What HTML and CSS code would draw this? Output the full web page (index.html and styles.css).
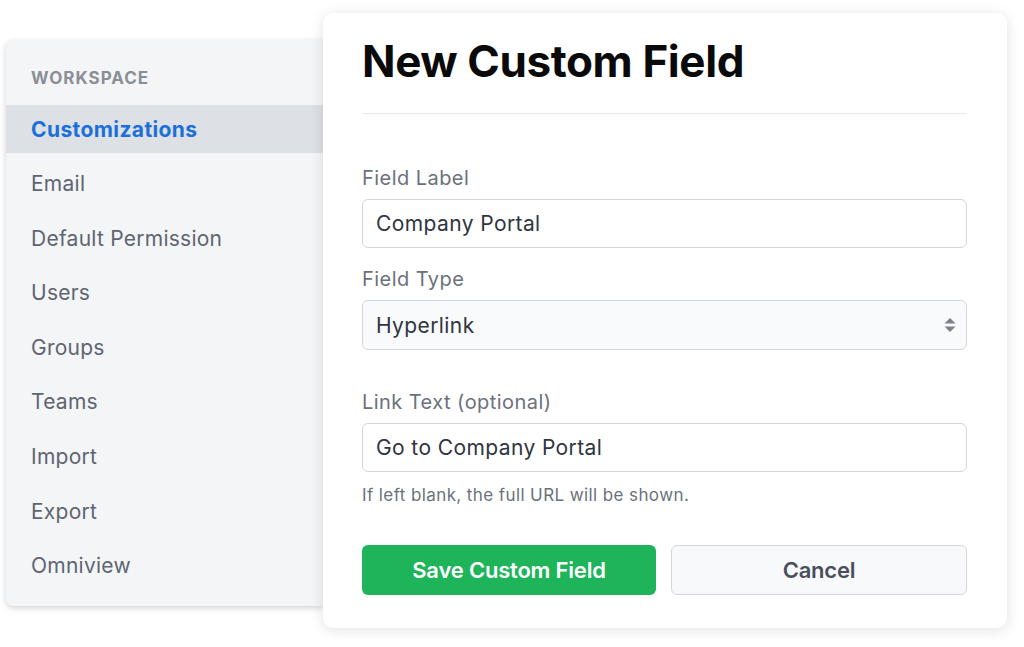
FILE: index.html
```html
<!DOCTYPE html>
<html lang="en">
<head>
<meta charset="utf-8">
<title>New Custom Field</title>
<link rel="stylesheet" href="styles.css">
</head>
<body>
<div class="stage">
  <nav class="sidebar">
    <div class="side-head">WORKSPACE</div>
    <ul class="side-list">
      <li class="side-item active">Customizations</li>
      <li class="side-item">Email</li>
      <li class="side-item">Default Permission</li>
      <li class="side-item">Users</li>
      <li class="side-item">Groups</li>
      <li class="side-item">Teams</li>
      <li class="side-item">Import</li>
      <li class="side-item">Export</li>
      <li class="side-item">Omniview</li>
    </ul>
  </nav>
  <main class="card">
    <h1 class="title">New Custom Field</h1>
    <div class="divider"></div>
    <div class="field">
      <label class="label">Field Label</label>
      <div class="input">Company Portal</div>
    </div>
    <div class="field">
      <label class="label">Field Type</label>
      <div class="input select">
        <span>Hyperlink</span>
        <svg class="arrows" width="12" height="16" viewBox="0 0 12 16"><path d="M6 1 L11.5 6.5 H0.5 Z" fill="#7b8089"/><path d="M6 15 L11.5 9.5 H0.5 Z" fill="#7b8089"/></svg>
      </div>
    </div>
    <div class="field field-gap">
      <label class="label">Link Text (optional)</label>
      <div class="input">Go to Company Portal</div>
      <p class="help">If left blank, the full URL will be shown.</p>
    </div>
    <div class="actions">
      <button class="btn btn-primary">Save Custom Field</button>
      <button class="btn btn-secondary">Cancel</button>
    </div>
  </main>
</div>
</body>
</html>
```
FILE: styles.css
```css
* { box-sizing: border-box; }
html, body { margin: 0; padding: 0; background: #ffffff; }
body { font-family: Inter, "Noto Sans", sans-serif; width: 1024px; height: 647px; overflow: hidden; }
.stage { display: flex; align-items: flex-start; padding-left: 6px; }

.sidebar {
  width: 317px;
  height: 566px;
  margin-top: 40px;
  background: #f4f5f7;
  border-radius: 8px 0 0 8px;
  box-shadow: 0 2px 6px rgba(0,0,0,0.18);
  padding: 28px 0 17px 0;
  position: relative;
  z-index: 1;
}
.side-head {
  font-size: 17px;
  line-height: 20px;
  font-weight: 700;
  color: #8a8e96;
  padding-left: 25px;
  letter-spacing: 1px;
}
.side-list { list-style: none; margin: 17px 0 0 0; padding: 0; display: flex; flex-direction: column; gap: 6.6px; }
.side-item {
  height: 48px;
  display: flex;
  align-items: center;
  padding-left: 25px;
  font-size: 21px;
  letter-spacing: 0.25px;
  color: #5e6571;
}
.side-item.active { background: #dde1e6; color: #1a6fd8; font-weight: 700; letter-spacing: 0.4px; }

.card {
  width: 684px;
  height: 615px;
  margin-top: 13px;
  background: #ffffff;
  border-radius: 10px;
  box-shadow: 0 2px 14px rgba(0,0,0,0.12);
  padding: 22px 40px 0 39px;
  position: relative;
  z-index: 2;
}
.title {
  margin: 0;
  font-size: 44px;
  line-height: 52px;
  font-weight: 700;
  color: #0a0a0a;
  letter-spacing: -0.4px;
}
.divider { height: 1px; background: #e6e9ee; margin-top: 26px; margin-bottom: 52px; }
.field { display: flex; flex-direction: column; }
.label { font-size: 20px; line-height: 24px; color: #6b717b; margin-bottom: 9px; letter-spacing: 0.45px; }
.input {
  height: 49px;
  border: 1px solid #d3d7dd;
  border-radius: 6px;
  display: flex;
  align-items: center;
  padding-left: 13px;
  font-size: 21px;
  letter-spacing: 0.4px;
  color: #2f3540;
  margin-bottom: 19px;
  background: #fff;
}
.select { background: #f9fafb; justify-content: space-between; padding-right: 10px; margin-bottom: 40px; height: 50px; }
.arrows { display: block; }
.help { margin: 13px 0 0 0; font-size: 17px; line-height: 20px; color: #6b717b; letter-spacing: 0.4px; }
.field-gap .input { margin-bottom: 0; }
.actions { display: flex; gap: 15px; margin-top: 40px; }
.btn {
  flex: 1;
  height: 50px;
  border-radius: 6px;
  font-family: Inter, "Noto Sans", sans-serif;
  font-size: 22px;
  font-weight: 600;
  letter-spacing: -0.2px;
}
.btn-primary { background: #1db45a; color: #ffffff; border: none; }
.btn-secondary { background: #f8f9fb; color: #4a505b; border: 1px solid #d3d7dd; }
```
